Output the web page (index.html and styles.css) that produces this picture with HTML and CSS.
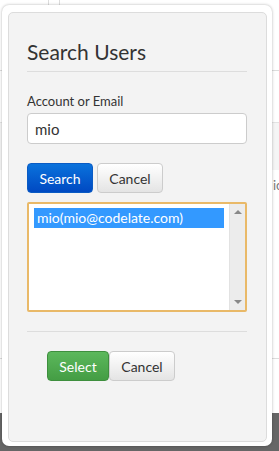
FILE: index.html
```html
<!DOCTYPE html>
<html lang="en">
<head>
  <meta charset="UTF-8" />
  <meta name="viewport" content="width=device-width, initial-scale=1.0"/>
  <title>Search Users</title>
  <link rel="stylesheet" href="styles.css">
</head>
<body>
  <div class="page">
    <div class="page-lines">
      <div class="col-line col-a"></div>
      <div class="col-line col-b"></div>
      <div class="row-line row-1"></div>
      <div class="row-band"></div>
      <div class="row-text">ic</div>
      <div class="row-line row-2"></div>
    </div>
    <div class="page-footer"></div>
  </div>

  <div class="dialog">
    <div class="panel">
      <h1>Search Users</h1>
      <hr />
      <label for="account">Account or Email</label>
      <input id="account" name="account" value="mio" />

      <div class="btn-row">
        <button class="btn btn-blue">Search</button>
        <button class="btn btn-plain">Cancel</button>
      </div>

      <div class="listbox">
        <div class="options">
          <div class="option selected">mio(mio@codelate.com)</div>
        </div>
        <div class="scrollbar">
          <span class="arrow up"></span>
          <span class="arrow down"></span>
        </div>
      </div>

      <hr class="sep" />

      <div class="btn-row footer">
        <button class="btn btn-green">Select</button>
        <button class="btn btn-plain">Cancel</button>
      </div>
    </div>
  </div>
</body>
</html>
```
FILE: styles.css
```css
body {
  margin: 0;
  font-family: Lato, "Open Sans", sans-serif;
  background: #fff;
  width: 279px;
  height: 451px;
  overflow: hidden;
}
.page {
  height: 451px;
  display: flex;
  flex-direction: column;
}
.page-lines {
  flex: 1;
  position: relative;
  background: #fff;
}
.page-footer {
  height: 38px;
  background: #666;
}
.col-line {
  position: absolute;
  top: 0;
  width: 1px;
  height: 6px;
  background: #ddd;
}
.col-a { left: 48px; }
.col-b { left: 59px; }
.row-line {
  position: absolute;
  left: 0;
  right: 0;
  height: 1px;
  background: #ddd;
}
.row-1 { top: 70px; }
.row-2 { top: 358px; }
.row-band {
  position: absolute;
  left: 0;
  right: 0;
  top: 122px;
  height: 47px;
  background: #f5f5f5;
  border-top: 1px solid #e3e3e3;
}
.row-text {
  position: absolute;
  left: 273px;
  top: 177px;
  font-size: 13px;
  color: #777;
}
.dialog {
  position: absolute;
  left: 2px;
  top: 5px;
  width: 270px;
  height: 441px;
  background: #fff;
  border-radius: 7px;
  box-shadow: 0 0 3px rgba(0, 0, 0, 0.3);
  padding: 7px 5px 4px 6px;
  box-sizing: border-box;
}
.panel {
  height: 100%;
  box-sizing: border-box;
  background: #f3f3f3;
  border: 1px solid #dcdcdc;
  border-radius: 5px;
  padding: 24px 19px 0 18px;
}
h1 {
  margin: 0;
  font-weight: normal;
  font-size: 21px;
  line-height: 30px;
  color: #333;
}
hr {
  border: none;
  border-top: 1px solid #ddd;
  margin: 4px 0 0;
}
hr.sep {
  margin-top: 19px;
}
label {
  display: block;
  margin-top: 20px;
  font-size: 13px;
  line-height: 18px;
  color: #333;
}
input {
  display: block;
  width: 100%;
  box-sizing: border-box;
  height: 31px;
  margin-top: 3px;
  padding: 0 7px;
  border: 1px solid #ccc;
  border-radius: 4px;
  font-family: inherit;
  font-size: 15px;
  color: #333;
  background: #fff;
}
.btn-row {
  display: flex;
  gap: 4px;
  margin-top: 19px;
}
.btn {
  height: 30px;
  padding: 0 10px;
  border-radius: 4px;
  font-family: inherit;
  font-size: 14px;
  border: 1px solid;
}
.btn-blue {
  width: 66px;
  color: #fff;
  background: linear-gradient(#0a72dc, #0049c2);
  border-color: #0a5bc4;
}
.btn-plain {
  width: 66px;
  color: #333;
  background: linear-gradient(#fff, #e4e4e4);
  border-color: #ccc;
}
.btn-green {
  width: 62px;
  color: #fff;
  background: linear-gradient(#5cb85c, #449d44);
  border-color: #3e8f3e;
}
.listbox {
  display: flex;
  margin-top: 9px;
  height: 110px;
  box-sizing: border-box;
  border: 2px solid #e9b968;
  border-radius: 2px;
  background: #fff;
}
.options {
  flex: 1;
  padding: 4px 5px;
}
.option {
  font-size: 14px;
  line-height: 20px;
  padding: 0 3px;
  color: #333;
}
.option.selected {
  background: #3399ff;
  color: #fff;
}
.scrollbar {
  width: 15px;
  background: #ececec;
  border-left: 1px solid #e2e2e2;
  display: flex;
  flex-direction: column;
  justify-content: space-between;
  align-items: center;
  padding: 6px 0;
}
.arrow {
  width: 0;
  height: 0;
  border-left: 4px solid transparent;
  border-right: 4px solid transparent;
}
.arrow.up { border-bottom: 4px solid #888; }
.arrow.down { border-top: 4px solid #888; }
.footer {
  margin-top: 19px;
  padding-left: 20px;
  gap: 0;
}
```
